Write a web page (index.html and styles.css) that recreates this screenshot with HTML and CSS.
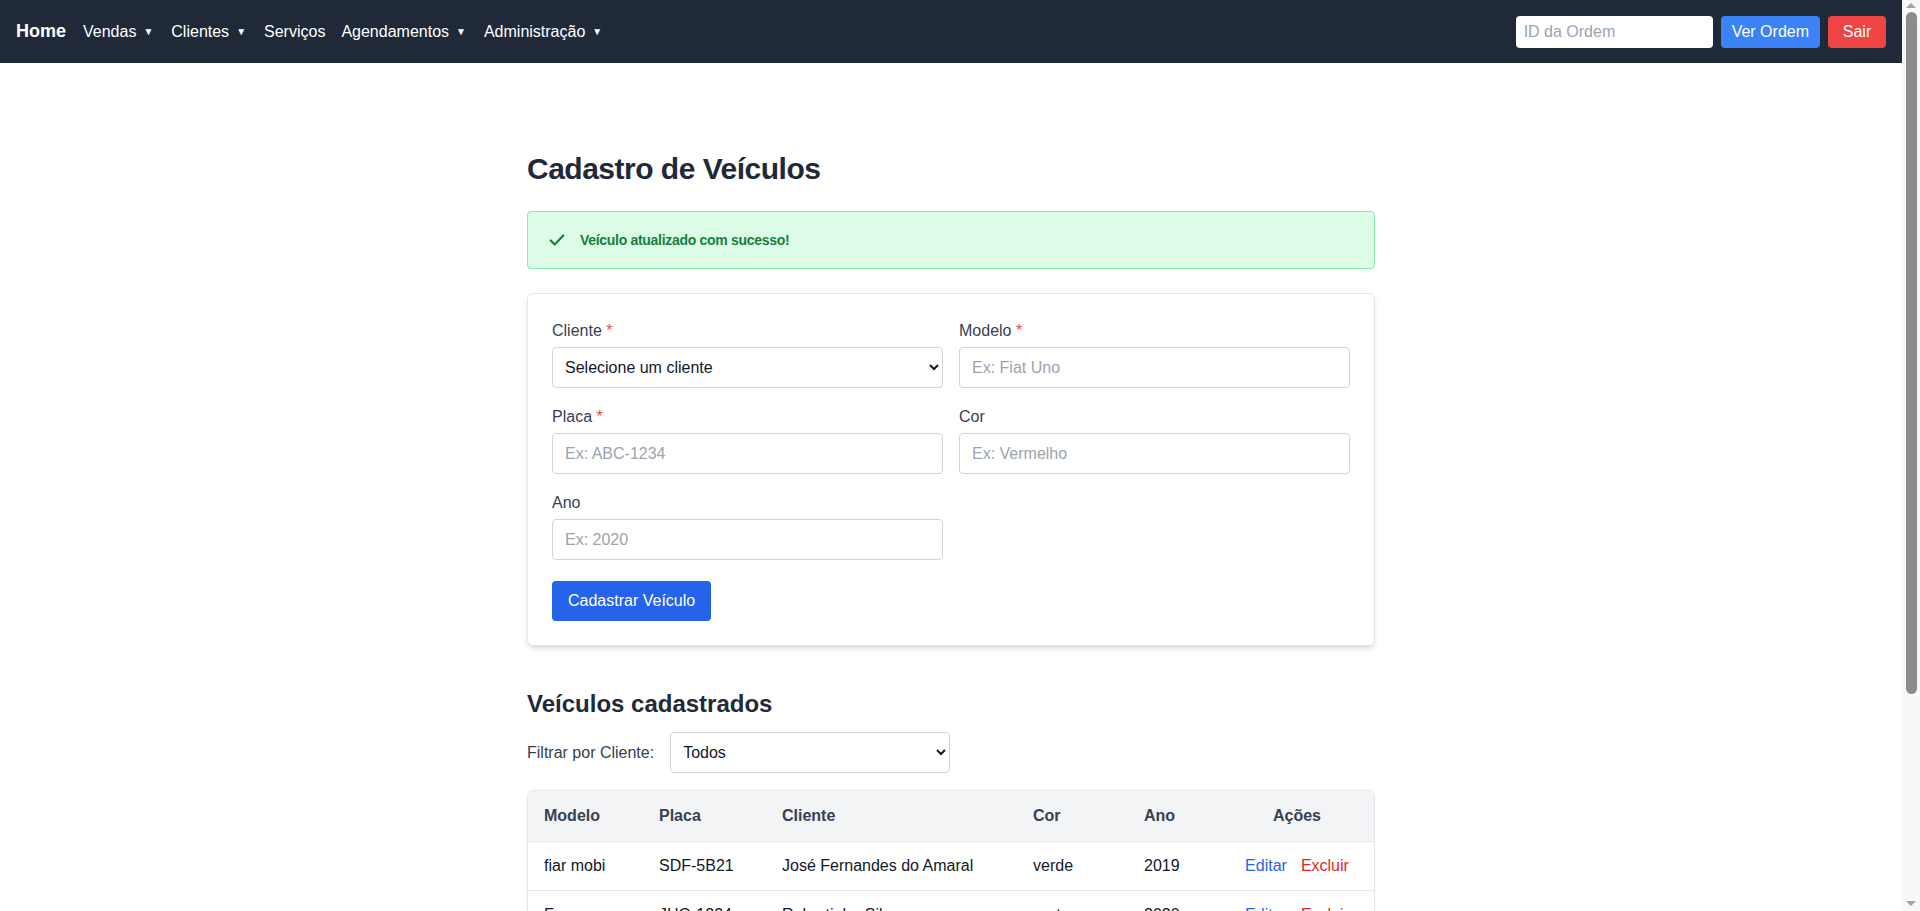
FILE: index.html
```html
<!DOCTYPE html>
<html lang="pt-BR">
<head>
<meta charset="utf-8">
<title>Cadastro de Veículos</title>
<link rel="stylesheet" href="styles.css">
</head>
<body>
<nav class="navbar">
  <div class="nav-left">
    <a class="brand" href="#">Home</a>
    <a class="nav-item" href="#">Vendas <span class="caret">▼</span></a>
    <a class="nav-item" href="#">Clientes <span class="caret">▼</span></a>
    <a class="nav-item" href="#">Serviços</a>
    <a class="nav-item" href="#">Agendamentos <span class="caret">▼</span></a>
    <a class="nav-item" href="#">Administração <span class="caret">▼</span></a>
  </div>
  <form class="nav-right">
    <input class="order-input" type="text" placeholder="ID da Ordem">
    <button class="btn btn-order" type="button">Ver Ordem</button>
    <button class="btn btn-logout" type="button">Sair</button>
  </form>
</nav>

<main class="page">
  <h1 class="page-title">Cadastro de Veículos</h1>

  <div class="alert">
    <svg class="alert-icon" viewBox="0 0 20 20" width="18" height="18" aria-hidden="true">
      <path d="M3 10.5 L7.5 15 L17 5" fill="none" stroke="currentColor" stroke-width="2.4" stroke-linecap="round" stroke-linejoin="round"/>
    </svg>
    <span class="alert-text">Veículo atualizado com sucesso!</span>
  </div>

  <form class="card">
    <div class="form-grid">
      <div class="field">
        <label class="field-label">Cliente <span class="req">*</span></label>
        <select class="control">
          <option>Selecione um cliente</option>
        </select>
      </div>
      <div class="field">
        <label class="field-label">Modelo <span class="req">*</span></label>
        <input class="control" type="text" placeholder="Ex: Fiat Uno">
      </div>
      <div class="field">
        <label class="field-label">Placa <span class="req">*</span></label>
        <input class="control" type="text" placeholder="Ex: ABC-1234">
      </div>
      <div class="field">
        <label class="field-label">Cor</label>
        <input class="control" type="text" placeholder="Ex: Vermelho">
      </div>
      <div class="field">
        <label class="field-label">Ano</label>
        <input class="control" type="text" placeholder="Ex: 2020">
      </div>
    </div>
    <button class="btn-primary" type="button">Cadastrar Veículo</button>
  </form>

  <section class="list-section">
    <h2 class="section-title">Veículos cadastrados</h2>
    <div class="filter-row">
      <label class="filter-label">Filtrar por Cliente:</label>
      <select class="control filter-select">
        <option>Todos</option>
      </select>
    </div>

    <div class="table-wrap">
      <table class="vehicles">
        <thead>
          <tr>
            <th class="c-modelo">Modelo</th>
            <th class="c-placa">Placa</th>
            <th class="c-cliente">Cliente</th>
            <th class="c-cor">Cor</th>
            <th class="c-ano">Ano</th>
            <th class="c-acoes">Ações</th>
          </tr>
        </thead>
        <tbody>
          <tr>
            <td>fiar mobi</td>
            <td>SDF-5B21</td>
            <td>José Fernandes do Amaral</td>
            <td>verde</td>
            <td>2019</td>
            <td class="actions"><a class="link-edit" href="#">Editar</a><a class="link-del" href="#">Excluir</a></td>
          </tr>
          <tr>
            <td>Fox</td>
            <td>JHG-1234</td>
            <td>Robertinho Silva</td>
            <td>preto</td>
            <td>2020</td>
            <td class="actions"><a class="link-edit" href="#">Editar</a><a class="link-del" href="#">Excluir</a></td>
          </tr>
          <tr>
            <td>Gol</td>
            <td>KLM-9087</td>
            <td>Maria Souza</td>
            <td>branco</td>
            <td>2015</td>
            <td class="actions"><a class="link-edit" href="#">Editar</a><a class="link-del" href="#">Excluir</a></td>
          </tr>
          <tr>
            <td>Onix</td>
            <td>QWE-4F56</td>
            <td>Carlos Pereira</td>
            <td>prata</td>
            <td>2021</td>
            <td class="actions"><a class="link-edit" href="#">Editar</a><a class="link-del" href="#">Excluir</a></td>
          </tr>
          <tr>
            <td>Civic</td>
            <td>BRA-2E19</td>
            <td>Ana Lima</td>
            <td>azul</td>
            <td>2018</td>
            <td class="actions"><a class="link-edit" href="#">Editar</a><a class="link-del" href="#">Excluir</a></td>
          </tr>
          <tr>
            <td>HB20</td>
            <td>PQR-7H33</td>
            <td>João Batista</td>
            <td>cinza</td>
            <td>2022</td>
            <td class="actions"><a class="link-edit" href="#">Editar</a><a class="link-del" href="#">Excluir</a></td>
          </tr>
        </tbody>
      </table>
    </div>
  </section>
</main>

<div class="fake-scrollbar" aria-hidden="true">
  <span class="sb-arrow sb-up"></span>
  <span class="sb-thumb"></span>
  <span class="sb-arrow sb-down"></span>
</div>
</body>
</html>
```

FILE: styles.css
```css
* {
  box-sizing: border-box;
}

html, body {
  margin: 0;
  padding: 0;
}

body {
  font-family: "Liberation Sans", Arial, sans-serif;
  font-size: 16px;
  color: #111827;
  background: #ffffff;
  padding-right: 18px;
}

a {
  text-decoration: none;
  color: inherit;
}

/* ---------- Window scrollbar (drawn over the page edge) ---------- */
.fake-scrollbar {
  position: fixed;
  top: 0;
  right: 0;
  bottom: 0;
  width: 18px;
  background: #f8f8f8;
  display: flex;
  flex-direction: column;
  align-items: center;
  z-index: 10;
}

.sb-arrow {
  width: 0;
  height: 0;
  border-left: 5px solid transparent;
  border-right: 5px solid transparent;
}

.sb-up {
  margin-top: 3px;
  border-bottom: 5px solid #a3a3a3;
}

.sb-down {
  margin-top: auto;
  margin-bottom: 5px;
  border-top: 5px solid #a3a3a3;
}

.sb-thumb {
  width: 11px;
  height: 682px;
  margin-top: 4px;
  border-radius: 6px;
  background: #8b8b8b;
}

/* ---------- Navbar ---------- */
.navbar {
  display: flex;
  align-items: center;
  justify-content: space-between;
  height: 63px;
  padding: 0 16px;
  background: #1f2937;
  color: #ffffff;
}

.nav-left {
  display: flex;
  align-items: center;
  gap: 16px;
}

.brand {
  font-size: 18px;
  font-weight: 700;
  margin-right: 1px;
}

.nav-item {
  font-size: 16px;
  display: flex;
  align-items: center;
}

.caret {
  font-size: 10px;
  margin-left: 7px;
  margin-right: 2px;
}

.nav-right {
  display: flex;
  align-items: center;
  gap: 8px;
  margin: 0;
}

.order-input {
  width: 197px;
  height: 32px;
  border: none;
  border-radius: 4px;
  padding: 0 8px;
  font-family: inherit;
  font-size: 16px;
  color: #111827;
  background: #ffffff;
}

.order-input::placeholder {
  color: #9ca3af;
}

.btn {
  height: 32px;
  border: none;
  border-radius: 4px;
  padding: 0 11px;
  font-family: inherit;
  font-size: 16px;
  color: #ffffff;
  cursor: pointer;
}

.btn-order {
  background: #3b82f6;
}

.btn-logout {
  background: #ef4444;
  min-width: 58px;
}

/* ---------- Page ---------- */
.page {
  max-width: 896px;
  margin: 0 auto;
  padding: 88px 24px 36px;
}

.page-title {
  margin: 0 0 24px;
  font-size: 30px;
  line-height: 36px;
  font-weight: 700;
  letter-spacing: -0.5px;
  color: #1f2937;
}

.alert {
  display: flex;
  align-items: center;
  gap: 14px;
  padding: 16px 20px;
  margin-bottom: 24px;
  background: #dcfce7;
  border: 1px solid #86efac;
  border-radius: 4px;
  color: #15803d;
}

.alert-icon {
  color: #15803d;
  flex: none;
}

.alert-text {
  font-size: 14px;
  line-height: 24px;
  font-weight: 600;
  letter-spacing: -0.3px;
}

/* ---------- Form card ---------- */
.card {
  background: #ffffff;
  border: 1px solid #e5e7eb;
  border-radius: 6px;
  padding: 24px;
  margin: 0;
  box-shadow: 0 4px 6px -1px rgba(0, 0, 0, 0.1), 0 2px 4px -2px rgba(0, 0, 0, 0.1);
}

.form-grid {
  display: grid;
  grid-template-columns: 1fr 1fr;
  column-gap: 16px;
  row-gap: 16px;
}

.field {
  display: flex;
  flex-direction: column;
}

.field-label {
  font-size: 16px;
  line-height: 24px;
  margin-top: 1px;
  margin-bottom: 4px;
  color: #374151;
}

.req {
  color: #ef4444;
}

.control {
  height: 41px;
  width: 100%;
  border: 1px solid #d1d5db;
  border-radius: 4px;
  padding: 0 12px;
  font-family: inherit;
  font-size: 16px;
  color: #111827;
  background: #ffffff;
}

.control::placeholder {
  color: #9ca3af;
}

select.control {
  padding: 0 8px;
}

.btn-primary {
  display: block;
  margin-top: 21px;
  height: 40px;
  padding: 0 16px;
  border: none;
  border-radius: 4px;
  background: #2563eb;
  color: #ffffff;
  font-family: inherit;
  font-size: 16px;
  cursor: pointer;
}

/* ---------- List ---------- */
.list-section {
  margin-top: 42px;
}

.section-title {
  margin: 0 0 12px;
  font-size: 24px;
  line-height: 32px;
  font-weight: 600;
  color: #1f2937;
}

.filter-row {
  display: flex;
  align-items: center;
  gap: 16px;
  margin-bottom: 17px;
}

.filter-label {
  font-size: 16px;
  color: #374151;
}

.filter-select {
  width: 280px;
  height: 41px;
}

.table-wrap {
  border: 1px solid #e5e7eb;
  border-radius: 6px;
  overflow: hidden;
  box-shadow: 0 1px 2px rgba(0, 0, 0, 0.05);
}

.vehicles {
  width: 100%;
  border-collapse: collapse;
  table-layout: fixed;
}

.vehicles th {
  background: #f3f4f6;
  text-align: left;
  font-weight: 600;
  color: #374151;
  padding: 13px 16px;
  line-height: 24px;
  font-size: 16px;
}

.vehicles td {
  padding: 12px 16px;
  line-height: 24px;
  border-top: 1px solid #e5e7eb;
  color: #111827;
  white-space: nowrap;
}

.c-modelo { width: 115px; }
.c-placa { width: 123px; }
.c-cliente { width: 251px; }
.c-cor { width: 111px; }
.c-ano { width: 92px; }
.vehicles th.c-acoes { text-align: center; }

.actions {
  text-align: center;
}

.link-edit {
  color: #2563eb;
  margin-right: 14px;
}

.link-del {
  color: #dc2626;
}
```
